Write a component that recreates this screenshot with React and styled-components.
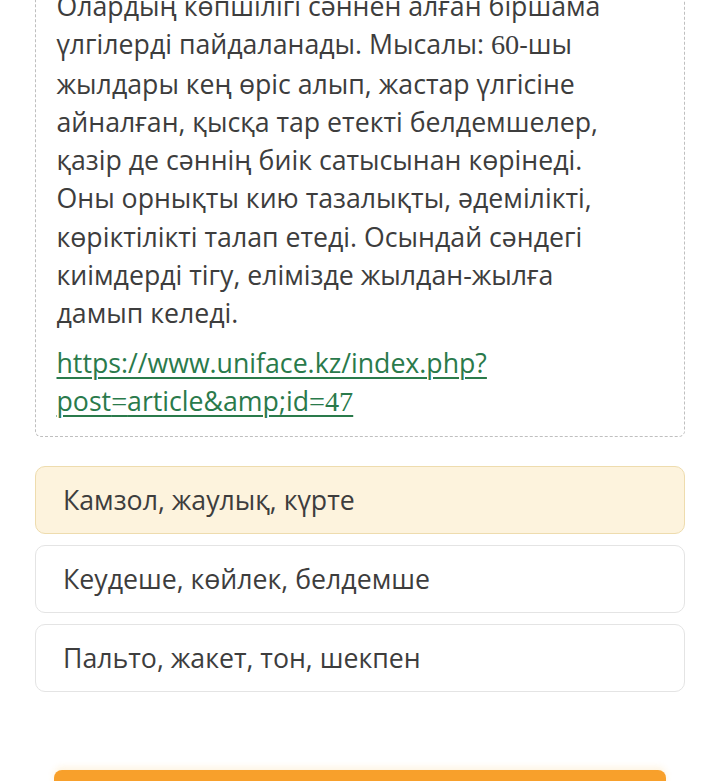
import React from "react";
import styled, { createGlobalStyle } from "styled-components";

const GlobalStyle = createGlobalStyle`
  html, body {
    margin: 0;
    padding: 0;
    background: #ffffff;
    overflow: hidden;
  }
  body {
    font-family: "Open Sans", "Noto Sans", sans-serif;
    color: #3b3b3b;
  }
`;

const Page = styled.div`
  width: 709px;
  height: 781px;
  overflow: hidden;
`;

const Content = styled.div`
  margin-top: -13px;
  padding: 0 24px 0 35px;
  display: flex;
  flex-direction: column;
`;

const Passage = styled.div`
  border: 1.5px dashed #bfbfbf;
  border-top: none;
  border-radius: 0 0 6px 6px;
  padding: 0 16px 15px 20.5px;
`;

const Text = styled.p`
  margin: 0;
  font-size: 26.7px;
  line-height: 38.3px;
  white-space: nowrap;
  color: #3d3d3d;
`;

const Num = styled.span`
  font-family: "Liberation Serif", "DejaVu Serif", serif;
  font-size: 1.06em;
`;

const Link = styled.a`
  display: block;
  margin-top: 11px;
  font-size: 26.7px;
  line-height: 38px;
  white-space: nowrap;
  color: #2a7a4b;
  text-decoration: underline;
  text-underline-offset: 4px;
  text-decoration-thickness: 1.5px;
`;

const Options = styled.div`
  margin-top: 29px;
  display: flex;
  flex-direction: column;
  gap: 11px;
`;

const Option = styled.div`
  height: 68px;
  box-sizing: border-box;
  display: flex;
  align-items: center;
  padding: 0 27px;
  border-radius: 10px;
  border: 1.5px solid ${(p) => (p.$selected ? "#eedcae" : "#e4e4e4")};
  background: ${(p) => (p.$selected ? "#fdf3dd" : "#ffffff")};
  font-size: 26.7px;
  color: #3d3d3d;
`;

const ButtonBar = styled.div`
  margin: 78px 19px 0 19px;
  height: 40px;
  border-radius: 8px 8px 0 0;
  background: #f8a02b;
  box-shadow: 0 -3px 6px rgba(248, 180, 60, 0.15);
`;

const lines = [
  "Олардың көпшілігі сәннен алған біршама",
  <>үлгілерді пайдаланады. Мысалы: <Num>60</Num>-шы</>,
  "жылдары кең өріс алып, жастар үлгісіне",
  "айналған, қысқа тар етекті белдемшелер,",
  "қазір де сәннің биік сатысынан көрінеді.",
  "Оны орнықты кию тазалықты, әдемілікті,",
  "көріктілікті талап етеді. Осындай сәндегі",
  "киімдерді тігу, елімізде жылдан-жылға",
  "дамып келеді.",
];

const options = [
  { text: "Камзол, жаулық, күрте", selected: true },
  { text: "Кеудеше, көйлек, белдемше" },
  { text: "Пальто, жакет, тон, шекпен" },
];

export default function App() {
  return (
    <Page>
      <GlobalStyle />
      <Content>
        <Passage>
          <Text>
            {lines.map((l, i) => (
              <React.Fragment key={i}>
                {l}
                {i < lines.length - 1 && <br />}
              </React.Fragment>
            ))}
          </Text>
          <Link href="#">
            https://www.uniface.kz/index.php?
            <br />
            post<Num>=</Num>article&amp;amp;id<Num>=47</Num>
          </Link>
        </Passage>
        <Options>
          {options.map((o) => (
            <Option key={o.text} $selected={o.selected}>
              {o.text}
            </Option>
          ))}
        </Options>
        <ButtonBar />
      </Content>
    </Page>
  );
}
